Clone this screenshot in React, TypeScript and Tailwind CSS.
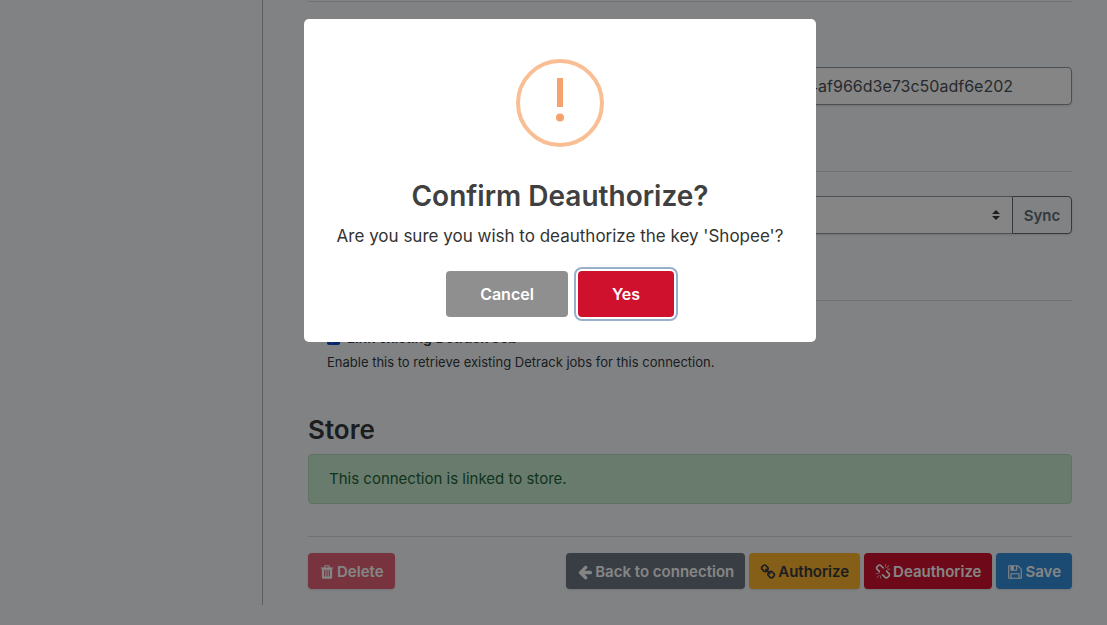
import React from "react";

const icons = {
  trash:
    "M704 1376v-704q0-14-9-23t-23-9h-64q-14 0-23 9t-9 23v704q0 14 9 23t23 9h64q14 0 23-9t9-23zm256 0v-704q0-14-9-23t-23-9h-64q-14 0-23 9t-9 23v704q0 14 9 23t23 9h64q14 0 23-9t9-23zm256 0v-704q0-14-9-23t-23-9h-64q-14 0-23 9t-9 23v704q0 14 9 23t23 9h64q14 0 23-9t9-23zm-544-992h448l-48-117q-7-9-17-11h-317q-10 2-17 11zm928 32v64q0 14-9 23t-23 9h-96v948q0 83-47 143.5t-113 60.5h-832q-66 0-113-58.5t-47-141.5v-952h-96q-14 0-23-9t-9-23v-64q0-14 9-23t23-9h309l70-167q15-37 54-63t79-26h320q40 0 79 26t54 63l70 167h309q14 0 23 9t9 23z",
  arrowLeft:
    "M1664 896v128q0 53-32.5 90.5t-84.5 37.5h-704l293 294q38 36 38 90t-38 90l-75 76q-37 37-90 37-52 0-91-37l-651-652q-37-37-37-90 0-52 37-91l651-650q38-38 91-38 52 0 90 38l75 74q38 38 38 91t-38 91l-293 293h704q52 0 84.5 37.5t32.5 90.5z",
  chain:
    "M1520 1216q0-40-28-68l-208-208q-28-28-68-28-42 0-72 32 3 3 19 18.5t21.5 21.5 15 19 13 25.5 3.5 27.5q0 40-28 68t-68 28q-15 0-27.5-3.5t-25.5-13-19-15-21.5-21.5-18.5-19q-33 31-33 73 0 40 28 68l206 207q27 27 68 27 40 0 68-26l147-146q28-28 28-67zm-703-705q0-40-28-68l-206-207q-28-28-68-28-39 0-68 27l-147 146q-28 28-28 67 0 40 28 68l208 208q27 27 68 27 42 0 72-31-3-3-19-18.5t-21.5-21.5-15-19-13-25.5-3.5-27.5q0-40 28-68t68-28q15 0 27.5 3.5t25.5 13 19 15 21.5 21.5 18.5 19q33-31 33-73zm895 705q0 120-85 203l-147 146q-83 83-203 83-121 0-204-85l-206-207q-83-83-83-203 0-123 88-209l-88-88q-86 88-208 88-120 0-204-84l-208-208q-84-84-84-204t85-203l147-146q83-83 203-83 121 0 204 85l206 207q83 83 83 203 0 123-88 209l88 88q86-88 208-88 120 0 204 84l208 208q84 84 84 204z",
  chainBroken:
    "M503 1271l-256 256q-10 9-23 9-12 0-23-9-9-10-9-23t9-23l256-256q10-9 23-9t23 9q9 10 9 23t-9 23zm169 41v320q0 14-9 23t-23 9-23-9-9-23v-320q0-14 9-23t23-9 23 9 9 23zm-224-224q0 14-9 23t-23 9h-320q-14 0-23-9t-9-23 9-23 23-9h320q14 0 23 9t9 23zm1264 128q0 120-85 203l-147 146q-83 83-203 83-121 0-204-85l-334-335q-21-21-42-56l239-18 273 274q28 28 68 27.5t68-27.5l147-146q28-28 28-67 0-40-28-68l-274-275 18-239q35 21 56 42l336 336q84 86 84 204zm-617-724l-239 18-273-274q-28-28-68-28-39 0-68 27l-147 146q-28 28-28 67 0 40 28 68l274 274-18 240q-35-21-56-42l-336-336q-84-86-84-204 0-120 85-203l147-146q83-83 203-83 121 0 204 85l334 335q21 21 42 56zm633 84q0 14-9 23t-23 9h-320q-14 0-23-9t-9-23 9-23 23-9h320q14 0 23 9t9 23zm-544-544v320q0 14-9 23t-23 9-23-9-9-23v-320q0-14 9-23t23-9 23 9 9 23zm407 151l-256 256q-11 9-23 9t-23-9q-9-10-9-23t9-23l256-256q10-9 23-9t23 9q9 10 9 23t-9 23z",
  floppy:
    "M512 1536h768v-384h-768v384zm896 0h128v-896q0-14-10-38.5t-20-34.5l-281-281q-10-10-34-20t-39-10v416q0 40-28 68t-68 28h-576q-40 0-68-28t-28-68v-416h-128v1280h128v-416q0-40 28-68t68-28h832q40 0 68 28t28 68v416zm-384-928v-320q0-13-9.5-22.5t-22.5-9.5h-192q-13 0-22.5 9.5t-9.5 22.5v320q0 13 9.5 22.5t22.5 9.5h192q13 0 22.5-9.5t9.5-22.5zm640 32v928q0 40-28 68t-68 28h-1344q-40 0-68-28t-28-68v-1344q0-40 28-68t68-28h928q40 0 88 20t76 48l280 280q28 28 48 76t20 88z",
};

function Icon({ path }: { path: string }) {
  return (
    <svg viewBox="0 0 1792 1792" className="h-4 w-4 shrink-0" fill="currentColor" aria-hidden="true">
      <path d={path} />
    </svg>
  );
}

function ActionButton({ icon, label, tone }: { icon: string; label: string; tone: string }) {
  return (
    <button
      type="button"
      className={`flex h-9 items-center justify-center gap-0.5 whitespace-nowrap rounded px-[11px] pt-0.5 text-[15px] font-semibold shadow-sm ${tone}`}
    >
      <Icon path={icon} />
      {label}
    </button>
  );
}

function SettingsPage() {
  return (
    <div className="flex min-h-[605px] text-[#343a40]">
      <aside className="w-[263px] shrink-0 border-r border-[#b4b4b4]" />
      <main className="min-w-0 flex-1 pr-[35px] pl-[45px]">
        <hr className="mt-px border-[#d9dbdd]" />
        <input
          aria-label="Key"
          readOnly
          defaultValue="4af966d3e73c50adf6e202"
          className="mt-[65px] block h-[38px] w-full rounded border border-[#8d9ba8] bg-white pr-[58px] text-right text-base text-[#495057] shadow-sm"
        />
        <hr className="mt-[66px] border-[#d9dbdd]" />
        <div className="mt-6 flex h-[38px] rounded shadow-sm">
          <div className="relative flex-1">
            <select
              aria-label="Source"
              className="h-full w-full appearance-none rounded-l border border-r-0 border-[#8d9ba8] bg-white"
            />
            <svg viewBox="0 0 8 10" className="pointer-events-none absolute top-[14px] right-3 h-[10px] w-2" fill="#343a40" aria-hidden="true">
              <path d="M4 0 0 4h8zM4 10 0 6h8z" />
            </svg>
          </div>
          <button type="button" className="w-[60px] rounded-r border border-[#606f7b] pt-0.5 text-[15px] font-semibold text-[#606f7b]">
            Sync
          </button>
        </div>
        <hr className="mt-[66px] border-[#d9dbdd]" />
        <div className="mt-[27px] pl-[19px]">
          <label className="flex h-5 items-center gap-[7px] text-sm leading-5 font-semibold">
            <input type="checkbox" defaultChecked className="h-[13px] w-[13px] accent-[#0b50d0]" />
            Link existing Detrack Job
          </label>
          <p className="mt-1 text-[13px] leading-5">Enable this to retrieve existing Detrack jobs for this connection.</p>
        </div>
        <h2 className="mt-10 text-[26px] leading-9 font-semibold">Store</h2>
        <div className="mt-1.5 flex h-[50px] items-center rounded border border-[#b0dfbf] bg-[#c9ebd1] px-5 text-[15px] text-[#1d643b]">
          This connection is linked to store.
        </div>
        <hr className="mt-8 border-[#d9dbdd]" />
        <div className="mt-4 flex gap-1">
          <ActionButton icon={icons.trash} label="Delete" tone="mr-auto bg-[#e46577] text-white" />
          <ActionButton icon={icons.arrowLeft} label="Back to connection" tone="bg-[#6c7883] text-white" />
          <ActionButton icon={icons.chain} label="Authorize" tone="bg-[#ffb42e] text-[#343a40]" />
          <ActionButton icon={icons.chainBroken} label="Deauthorize" tone="bg-[#d1122e] text-white" />
          <ActionButton icon={icons.floppy} label="Save" tone="bg-[#3490dc] text-white" />
        </div>
      </main>
    </div>
  );
}

function ConfirmDialog() {
  return (
    <div className="fixed inset-0 flex items-start justify-center bg-black/48 pt-[19px] pl-[13px]">
      <div
        role="alertdialog"
        aria-modal="true"
        aria-labelledby="confirm-title"
        aria-describedby="confirm-text"
        className="flex w-full max-w-[512px] flex-col items-center rounded-[5px] bg-white pt-10 pb-[25px]"
      >
        <svg viewBox="0 0 88 88" className="h-[88px] w-[88px]" aria-hidden="true">
          <circle cx="44" cy="44" r="42" fill="none" stroke="#f9be93" strokeWidth="4" />
          <rect x="41" y="19" width="6" height="29" fill="#f6a26c" />
          <circle cx="44" cy="58.5" r="4" fill="#f6a26c" />
        </svg>
        <h1 id="confirm-title" className="mt-[31px] text-[28px] leading-9 font-semibold text-[#404040]">
          Confirm Deauthorize?
        </h1>
        <p id="confirm-text" className="mt-2.5 text-[17px] leading-6 text-[#333333]">
          Are you sure you wish to deauthorize the key 'Shopee'?
        </p>
        <div className="mt-[23px] flex gap-2.5">
          <button type="button" className="h-[46px] w-[122px] rounded bg-[#8f8f8f] text-base font-semibold text-white">
            Cancel
          </button>
          <button
            type="button"
            className="h-[46px] w-24 rounded bg-[#d0112e] text-base font-semibold text-white ring-2 ring-[#9aafcc] ring-offset-2 ring-offset-white"
          >
            Yes
          </button>
        </div>
      </div>
    </div>
  );
}

export default function App() {
  return (
    <div className="min-h-screen bg-[#f8fafc] font-['Inter','Liberation_Sans',sans-serif]">
      <SettingsPage />
      <ConfirmDialog />
    </div>
  );
}
